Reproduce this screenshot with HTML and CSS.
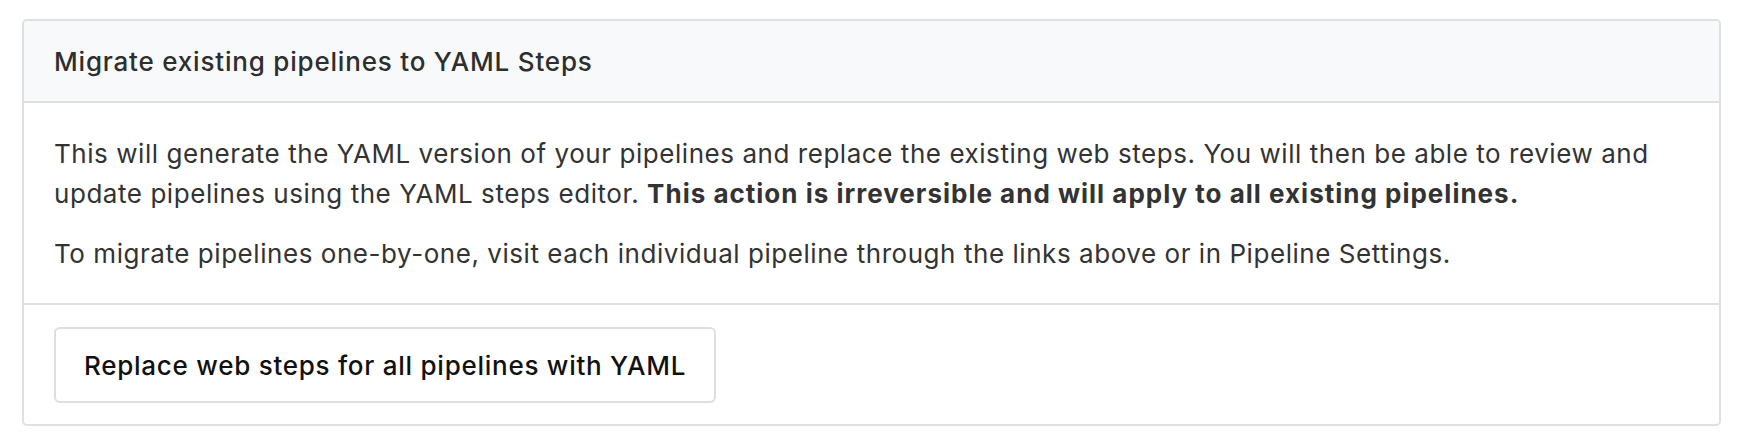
FILE: index.html
```html
<!DOCTYPE html>
<html lang="en">
<head>
<meta charset="utf-8">
<title>Migrate existing pipelines to YAML Steps</title>
<link rel="stylesheet" href="styles.css">
</head>
<body>
<div class="page">
  <section class="panel">
    <header class="panel-header">Migrate existing pipelines to YAML Steps</header>
    <div class="panel-body">
      <p>This will generate the YAML version of your pipelines and replace the existing web steps. You will then be able to review and update pipelines using the YAML steps editor. <strong>This action is irreversible and will apply to all existing pipelines.</strong></p>
      <p>To migrate pipelines one-by-one, visit each individual pipeline through the links above or in Pipeline Settings.</p>
    </div>
    <div class="panel-footer">
      <button class="btn" type="button">Replace web steps for all pipelines with YAML</button>
    </div>
  </section>
</div>
</body>
</html>
```

FILE: styles.css
```css
html, body {
  margin: 0;
  padding: 0;
  background: #ffffff;
}

body {
  font-family: Inter, "Liberation Sans", Arial, sans-serif;
  color: #333333;
  font-size: 26px;
  line-height: 40px;
  letter-spacing: 0.55px;
}

.page {
  padding: 19px 23px 20px 22px;
}

.panel {
  border: 2px solid #e0e0e0;
  border-radius: 5px;
  overflow: hidden;
}

.panel-header {
  background: #f8f9fa;
  border-bottom: 2px solid #e0e0e0;
  padding: 21px 30px 19px 30px;
  font-weight: 500;
  letter-spacing: 0.8px;
  color: #2e2e2e;
}

.panel-body {
  padding: 31px 30px 29px 30px;
  border-bottom: 2px solid #e0e0e0;
}

.panel-body p {
  margin: 0;
}

.panel-body p + p {
  margin-top: 20px;
}

.panel-body strong {
  font-weight: 700;
  letter-spacing: 1px;
}

.panel-footer {
  display: flex;
  align-items: flex-start;
  padding: 22px 30px 21px 30px;
}

.btn {
  font-family: inherit;
  font-size: 26px;
  line-height: 39px;
  font-weight: 500;
  letter-spacing: 0.74px;
  white-space: nowrap;
  color: #111111;
  background: #ffffff;
  border: 2px solid #dedede;
  border-radius: 6px;
  padding: 17px 28px 16px 28px;
  cursor: pointer;
}
```
